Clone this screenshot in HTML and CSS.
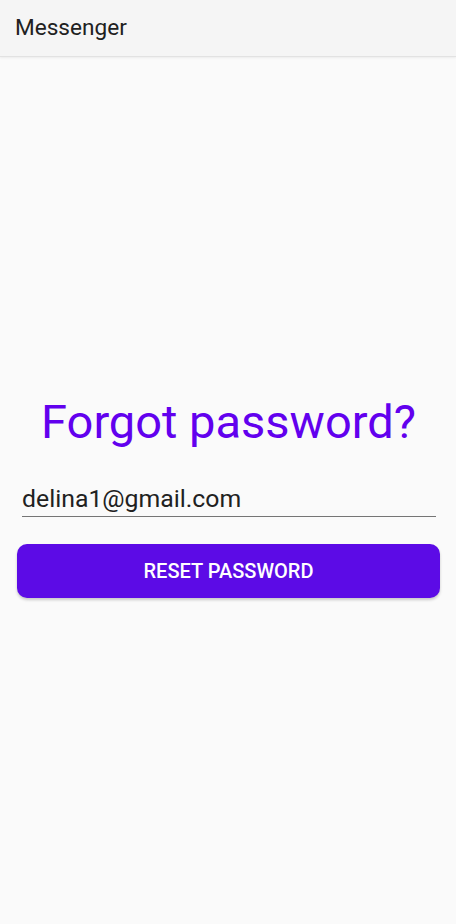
FILE: index.html
```html
<!DOCTYPE html>
<html>
<head>
<meta charset="utf-8">
<link rel="stylesheet" href="styles.css">
</head>
<body>
<header class="appbar">Messenger</header>
<main class="content">
  <h1 class="title">Forgot password?</h1>
  <div class="field">delina1@gmail.com</div>
  <button class="btn">RESET PASSWORD</button>
</main>
</body>
</html>
```
FILE: styles.css
```css
html, body {
  margin: 0;
  padding: 0;
}
body {
  width: 456px;
  height: 924px;
  background: #fafafa;
  font-family: Roboto, "Noto Sans", sans-serif;
  overflow: hidden;
}
.appbar {
  height: 57px;
  box-sizing: border-box;
  background: #f5f5f5;
  color: #212121;
  font-size: 22.6px;
  font-weight: 400;
  line-height: 55px;
  padding-left: 15px;
  border-bottom: 1px solid #e2e2e2;
  box-shadow: 0 1px 2px rgba(0,0,0,0.06);
}
.content {
  display: flex;
  flex-direction: column;
  padding: 0 16px 0 17px;
}
.title {
  margin: 338px 0 0 0;
  text-align: center;
  color: #6200ee;
  font-weight: 400;
  font-size: 47px;
  line-height: 54px;
}
.field {
  margin: 35px 4px 0 5px;
  font-size: 24.8px;
  color: #212121;
  line-height: 30px;
  padding-bottom: 2px;
  border-bottom: 1px solid #757575;
}
.btn {
  margin-top: 27px;
  height: 54px;
  border: none;
  border-radius: 10px;
  background: #5c0be6;
  color: #fff;
  font-family: Roboto, sans-serif;
  font-weight: 500;
  font-size: 20px;
  box-shadow: 0 2px 3px rgba(0,0,0,0.2);
}
```
